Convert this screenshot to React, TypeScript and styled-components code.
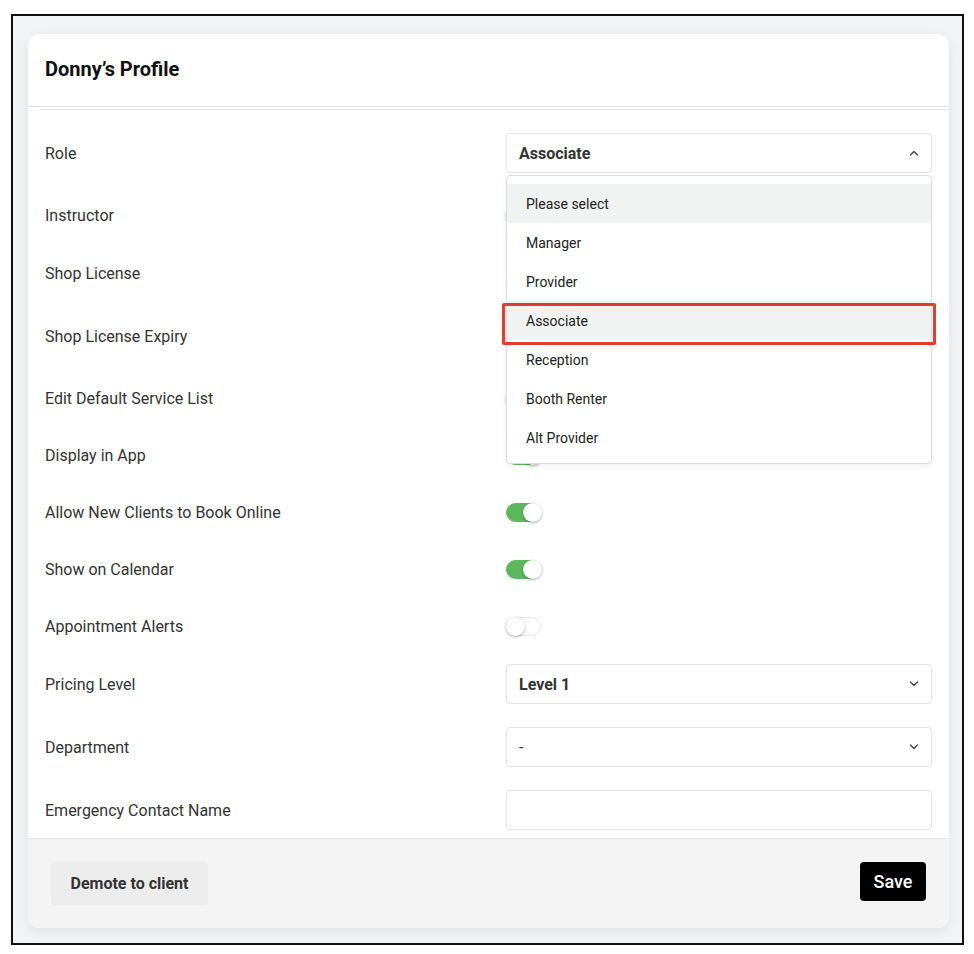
import { FunctionComponent } from 'react';
import styled, { createGlobalStyle } from 'styled-components';

type RowKind = 'field' | 'toggle';

interface IRow {
  label: string;
  kind: RowKind;
  control: 'select' | 'input' | 'toggle';
  value?: string;
  bold?: boolean;
  on?: boolean;
}

const GlobalStyle = createGlobalStyle`
  body {
    margin: 0;
    background: #ffffff;
    font-family: Roboto, 'Noto Sans', Arial, sans-serif;
    color: #333;
  }
  * {
    box-sizing: border-box;
  }
`;

const Frame = styled.div`
  margin: 14px 0 0 11px;
  width: 953px;
  height: 931px;
  border: 2px solid #111;
  background: #f2f3f5;
  padding: 18px 0 0 15px;
`;

const Card = styled.div`
  width: 921px;
  height: 894px;
  background: #fff;
  border-radius: 12px;
  box-shadow: 0 4px 14px rgba(0, 0, 0, 0.07);
  display: flex;
  flex-direction: column;
  overflow: hidden;
`;

const Header = styled.div`
  height: 73px;
  padding: 0 17px 2px;
  display: flex;
  align-items: center;
  border-bottom: 1px solid #e2e2e2;
  flex-shrink: 0;
`;

const Title = styled.h2`
  margin: 0;
  font-size: 20px;
  font-weight: 700;
  color: #111;
`;

const HeaderRule = styled.div`
  margin: 2px 0 0 12px;
  border-top: 1px solid #e8e8e8;
  flex-shrink: 0;
`;

const Body = styled.div`
  flex: 1;
  min-height: 0;
  overflow: hidden;
  padding: 23px 17px 0 17px;
`;

const Row = styled.div<{ $kind: RowKind }>`
  position: relative;
  display: grid;
  grid-template-columns: 461px 1fr;
  align-items: center;
  height: ${(p) => (p.$kind === 'field' ? '63px' : '57px')};
  padding: ${(p) => (p.$kind === 'field' ? '0 0 23px' : '8px 0 27px')};
`;

const Label = styled.span`
  font-size: 16px;
  color: #333;
`;

const SelectBox = styled.div`
  height: 40px;
  border: 1px solid #e3e3e3;
  border-radius: 4px;
  padding: 0 12px;
  display: flex;
  align-items: center;
  justify-content: space-between;
  background: #fff;
`;

const SelectValue = styled.span<{ $bold?: boolean }>`
  font-size: 16px;
  font-weight: ${(p) => (p.$bold ? 700 : 400)};
  color: #333;
`;

const TextInput = styled.div`
  height: 40px;
  border: 1px solid #e3e3e3;
  border-radius: 4px;
  background: #fff;
`;

const Switch = styled.div<{ $on?: boolean }>`
  position: relative;
  width: 35px;
  height: 19px;
  border-radius: 10px;
  background: ${(p) => (p.$on ? '#5cb85c' : '#fff')};
  border: 1px solid ${(p) => (p.$on ? '#5cb85c' : '#e6e6e6')};
`;

const Knob = styled.span<{ $on?: boolean }>`
  position: absolute;
  top: -1px;
  left: ${(p) => (p.$on ? '16px' : '-1px')};
  width: 19px;
  height: 19px;
  border-radius: 50%;
  background: #fff;
  box-shadow: 0 1px 3px rgba(0, 0, 0, 0.35);
`;

const Menu = styled.ul`
  position: absolute;
  top: 42px;
  left: 461px;
  right: 0;
  z-index: 10;
  margin: 0;
  padding: 8px 0 6px;
  list-style: none;
  background: #fff;
  border: 1px solid #dcdcdc;
  border-radius: 4px;
  box-shadow: 0 2px 6px rgba(0, 0, 0, 0.06);
`;

const Option = styled.li<{ $active?: boolean }>`
  position: relative;
  height: 39px;
  padding: 0 19px;
  display: flex;
  align-items: center;
  font-size: 14px;
  color: #222;
  background: ${(p) => (p.$active ? '#f1f2f2' : 'transparent')};
`;

const Highlight = styled.span`
  position: absolute;
  top: 2px;
  bottom: -5px;
  left: -5px;
  right: -5px;
  border: 3px solid #e53a2e;
  border-radius: 2px;
`;

const Footer = styled.div`
  height: 90px;
  flex-shrink: 0;
  border-top: 1px solid #e6e6e6;
  background: #f4f4f4;
  padding: 23px;
  display: flex;
  justify-content: space-between;
  align-items: flex-start;
`;

const GhostButton = styled.button`
  height: 43px;
  width: 157px;
  border: none;
  border-radius: 4px;
  background: #ececec;
  font-family: inherit;
  font-size: 16px;
  font-weight: 700;
  color: #333;
`;

const SaveButton = styled.button`
  height: 39px;
  width: 66px;
  border: none;
  border-radius: 4px;
  background: #000;
  font-family: inherit;
  font-size: 18px;
  font-weight: 500;
  color: #fff;
`;

const Chevron: FunctionComponent<{ up?: boolean }> = ({ up }) => (
  <svg width="10" height="6" viewBox="0 0 10 6" fill="none">
    <path
      d={up ? 'M1.5 5L5 1.5L8.5 5' : 'M1.5 1L5 4.5L8.5 1'}
      stroke="#444"
      strokeWidth="1.4"
      strokeLinecap="round"
      strokeLinejoin="round"
    />
  </svg>
);

const roles = [
  'Please select',
  'Manager',
  'Provider',
  'Associate',
  'Reception',
  'Booth Renter',
  'Alt Provider'
];

const rows: IRow[] = [
  { label: 'Instructor', kind: 'toggle', control: 'toggle' },
  { label: 'Shop License', kind: 'field', control: 'input' },
  { label: 'Shop License Expiry', kind: 'field', control: 'input' },
  { label: 'Edit Default Service List', kind: 'toggle', control: 'toggle' },
  { label: 'Display in App', kind: 'toggle', control: 'toggle', on: true },
  { label: 'Allow New Clients to Book Online', kind: 'toggle', control: 'toggle', on: true },
  { label: 'Show on Calendar', kind: 'toggle', control: 'toggle', on: true },
  { label: 'Appointment Alerts', kind: 'toggle', control: 'toggle' },
  { label: 'Pricing Level', kind: 'field', control: 'select', value: 'Level 1', bold: true },
  { label: 'Department', kind: 'field', control: 'select', value: '-' },
  { label: 'Emergency Contact Name', kind: 'field', control: 'input' }
];

const renderControl = (row: IRow) => {
  if (row.control === 'toggle') {
    return (
      <Switch $on={row.on}>
        <Knob $on={row.on} />
      </Switch>
    );
  }
  if (row.control === 'input') {
    return <TextInput />;
  }
  return (
    <SelectBox>
      <SelectValue $bold={row.bold}>{row.value}</SelectValue>
      <Chevron />
    </SelectBox>
  );
};

const App: FunctionComponent = () => {
  return (
    <>
      <GlobalStyle />
      <Frame>
        <Card>
          <Header>
            <Title>Donny’s Profile</Title>
          </Header>
          <HeaderRule />
          <Body>
            <Row $kind="field">
              <Label>Role</Label>
              <SelectBox>
                <SelectValue $bold>Associate</SelectValue>
                <Chevron up />
              </SelectBox>
              <Menu>
                {roles.map((role, i) => (
                  <Option key={role} $active={i === 0 || role === 'Associate'}>
                    {role}
                    {role === 'Associate' && <Highlight />}
                  </Option>
                ))}
              </Menu>
            </Row>
            {rows.map((row) => (
              <Row key={row.label} $kind={row.kind}>
                <Label>{row.label}</Label>
                <div>{renderControl(row)}</div>
              </Row>
            ))}
          </Body>
          <Footer>
            <GhostButton>Demote to client</GhostButton>
            <SaveButton>Save</SaveButton>
          </Footer>
        </Card>
      </Frame>
    </>
  );
};

export default App;
